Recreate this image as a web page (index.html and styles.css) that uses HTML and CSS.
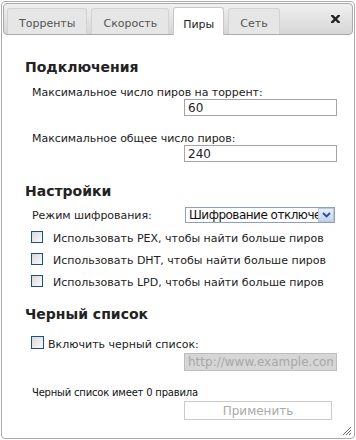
FILE: index.html
```html
<!DOCTYPE html>
<html lang="ru">
<head>
    <meta charset="UTF-8">
    <meta name="viewport" content="width=device-width, initial-scale=1.0">
    <title>Настройки</title>
    <link rel="stylesheet" href="styles.css">
</head>
<body>
    <div class="dialog">
        <div class="tabs">
            <div class="tab">Торренты</div>
            <div class="tab">Скорость</div>
            <div class="tab active">Пиры</div>
            <div class="tab">Сеть</div>
            <svg class="close" width="9" height="8" viewBox="0 0 9 8">
                <path d="M1 0.5 L8 7.5 M8 0.5 L1 7.5" stroke="#222" stroke-width="2.4" stroke-linecap="square"/>
            </svg>
        </div>

        <div class="panel">
            <h3 class="first">Подключения</h3>
            <div class="label">Максимальное число пиров на торрент:</div>
            <div class="field"><input class="text" type="text" value="60"></div>
            <div class="label second">Максимальное общее число пиров:</div>
            <div class="field"><input class="text" type="text" value="240"></div>

            <h3 class="mid">Настройки</h3>
            <div class="select-row">
                <span class="label">Режим шифрования:</span>
                <div class="select">
                    <span class="value">Шифрование отключено</span>
                    <span class="arrow">
                        <svg width="9" height="6" viewBox="0 0 9 6"><path d="M1 1 L4.5 4.5 L8 1" fill="none" stroke="#2a4f8c" stroke-width="1.8"/></svg>
                    </span>
                </div>
            </div>
            <div class="check"><span class="box"></span><span>Использовать PEX, чтобы найти больше пиров</span></div>
            <div class="check"><span class="box"></span><span>Использовать DHT, чтобы найти больше пиров</span></div>
            <div class="check"><span class="box"></span><span>Использовать LPD, чтобы найти больше пиров</span></div>

            <h3 class="last">Черный список</h3>
            <div class="check black"><span class="box"></span><span>Включить черный список:</span></div>
            <div class="field"><input class="text url" type="text" placeholder="http://www.example.com/" disabled></div>
            <div class="rules">Черный список имеет 0 правила</div>
            <div class="field"><button class="apply" disabled>Применить</button></div>
        </div>

        <svg class="grip" width="10" height="10" viewBox="0 0 10 10">
            <path d="M9 1 L1 9 M9 4 L4 9 M9 7 L7 9" stroke="#666" stroke-width="1"/>
        </svg>
    </div>
</body>
</html>
```

FILE: styles.css
```css
body { margin: 0; background: #fff; font-family: "DejaVu Sans", Verdana, sans-serif; font-size: 11px; color: #222; }

.dialog {
    position: relative; box-sizing: border-box; width: 354px; height: 438px;
    margin: 1px; padding: 1px; border: 1px solid #aaa; border-radius: 4px; background: #fff;
}

.tabs {
    display: flex; align-items: flex-end; gap: 4px; box-sizing: border-box; height: 32px;
    padding: 0 0 0 3px; border: 1px solid #aaa; border-radius: 4px;
    background: linear-gradient(#f0f0f0, #d6d6d6);
}
.tab {
    box-sizing: border-box; height: 26px; padding: 8px 11px 0; font-size: 11px; line-height: 13px;
    color: #555; background: #e6e6e6; border: 1px solid #d3d3d3; border-bottom: 0;
    border-radius: 3px 3px 0 0;
}
.tab.active {
    height: 28px; margin-bottom: -1px; padding: 10px 9px 0;
    background: #fff; border-color: #c8c8c8; color: #222;
}
.close { margin: 0 12px 0 auto; align-self: center; }

.panel { padding: 0 16px 0 22px; }
h3 { margin: 0; font-size: 14px; line-height: 17px; font-weight: bold; color: #222; }
h3.first { margin-top: 24px; }
h3.mid { margin-top: 21px; }
h3.last { margin-top: 19px; }

.label { display: block; padding-left: 7px; line-height: 13px; margin-top: 10px; letter-spacing: -0.05px; }
.label.second { margin-top: 16px; }
.field { display: flex; justify-content: flex-end; }
.text {
    box-sizing: border-box; width: 153px; height: 17px; margin: 0; padding: 0 3px;
    border: 1px solid #a5a5a5; font: 12px "DejaVu Sans", Verdana, sans-serif; color: #222;
}
.text.url { height: 18px; background: #d6d6d6; border-color: #bdbdbd; }
.text.url::placeholder { color: #a8a8a8; }

.select-row { display: flex; align-items: center; justify-content: space-between; margin-top: 7px; }
.select-row .label { margin-top: 0; }
.select {
    display: flex; align-items: center; box-sizing: border-box; width: 150px; height: 16px; margin-right: 2px;
    border: 1px solid #8fa1b8; font-size: 12px; line-height: 14px; color: #111; letter-spacing: -0.5px;
}
.select .value { flex: 1; overflow: hidden; white-space: nowrap; padding-left: 3px; }
.select .arrow {
    display: flex; align-items: center; justify-content: center; width: 16px; height: 14px; flex: none;
    box-sizing: border-box; border: 1px solid #b8c8e4; background: linear-gradient(#e6eefb, #c3d3ef);
}

.check { display: flex; align-items: flex-end; gap: 10px; padding-left: 6px; margin-top: 10px; line-height: 13px; }
.check span:last-child { margin-bottom: -2px; }
.select-row + .check { margin-top: 8px; }
.box {
    box-sizing: border-box; width: 12px; height: 12px; flex: none;
    border: 1px solid #1f4d85; background: linear-gradient(135deg, #d8d8d8, #fbfbfb);
}
.check.black { gap: 4px; margin-top: 13px; }
.check.black .box { height: 13px; width: 13px; }
.check.black + .field { margin-top: 4px; }

.rules { font-size: 10px; line-height: 12px; padding-left: 7px; margin-top: 16px; color: #111; letter-spacing: -0.2px; }
.apply {
    box-sizing: border-box; width: 148px; height: 19px; margin: 0 5px 0 0; padding: 0;
    border: 1px solid #ccc; background: #fff; color: #aaa;
    font: 12px "DejaVu Sans", Verdana, sans-serif;
}
.rules + .field { margin-top: 2px; }

.grip { position: absolute; right: 2px; bottom: 2px; }
```
